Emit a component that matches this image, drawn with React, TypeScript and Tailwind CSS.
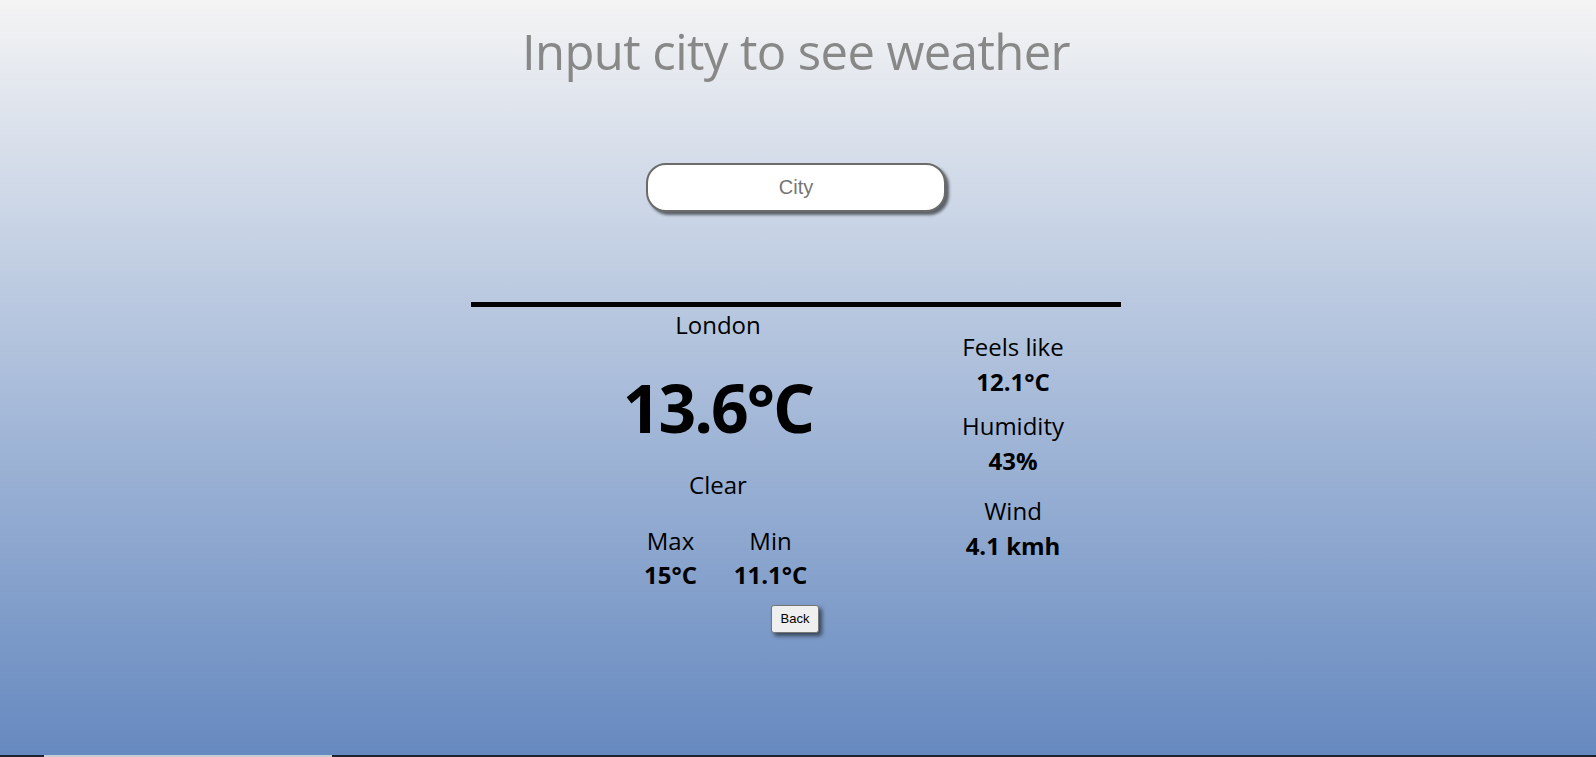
export default function App() {
  const details = [
    { label: 'Feels like', value: '12.1°C', gap: 'mt-0' },
    { label: 'Humidity', value: '43%', gap: 'mt-[10px]' },
    { label: 'Wind', value: '4.1 kmh', gap: 'mt-[16px]' },
  ];

  return (
    <div className="h-[757px] flex flex-col font-['Open_Sans',sans-serif] text-black">
      <main className="flex-1 pr-[4px] bg-gradient-to-b from-[#f4f4f4] to-[#6689bf] flex flex-col items-center">
        <h1 className="mt-[20px] text-[49px] leading-[62px] text-[#888888] tracking-[-0.6px]">
          Input city to see weather
        </h1>

        <input
          type="text"
          placeholder="City"
          className="mt-[81px] w-[300px] h-[49px] rounded-[20px] border-2 border-[#6b6b6b] bg-white text-center text-[20px] font-['Liberation_Sans',sans-serif] placeholder:text-[#757575] shadow-[3px_3px_3px_rgba(0,0,0,0.55)] outline-none"
        />

        <section className="mt-[90px] w-[650px] border-t-[5px] border-black flex">
          <div className="ml-[97px] w-[300px] flex flex-col items-center">
            <div className="mt-[2px] text-[24px] leading-[32px]">London</div>
            <div className="mt-[30px] text-[66px] leading-[72px] font-bold tracking-[-2px]">13.6°C</div>
            <div className="mt-[26px] text-[24px] leading-[32px]">Clear</div>
            <div className="mt-[24px] flex justify-center ml-[5px]">
              <div className="w-[100px] flex flex-col items-center">
                <div className="text-[24px] leading-[32px]">Max</div>
                <div className="mt-[2px] text-[24px] leading-[32px] font-bold">15°C</div>
              </div>
              <div className="w-[100px] flex flex-col items-center">
                <div className="text-[24px] leading-[32px]">Min</div>
                <div className="mt-[2px] text-[24px] leading-[32px] font-bold">11.1°C</div>
              </div>
            </div>
            <div className="w-full flex">
              <button className="mt-[14px] ml-[203px] w-[48px] h-[28px] bg-[#efefef] border border-[#767676] rounded-[3px] text-[13px] font-['Liberation_Sans',sans-serif] shadow-[3px_3px_4px_rgba(0,0,0,0.55)]">
                Back
              </button>
            </div>
          </div>

          <div className="ml-[70px] w-[150px] mt-[23px] flex flex-col items-center">
            {details.map((d) => (
              <div key={d.label} className={`${d.gap} flex flex-col items-center`}>
                <div className="text-[24px] leading-[34px]">{d.label}</div>
                <div className="text-[24px] leading-[35px] font-bold">{d.value}</div>
              </div>
            ))}
          </div>
        </section>
      </main>
      <div className="h-[2px] bg-[#1c2330] flex">
        <div className="ml-[44px] w-[288px] bg-[#c8ccd4]" />
      </div>
    </div>
  );
}
